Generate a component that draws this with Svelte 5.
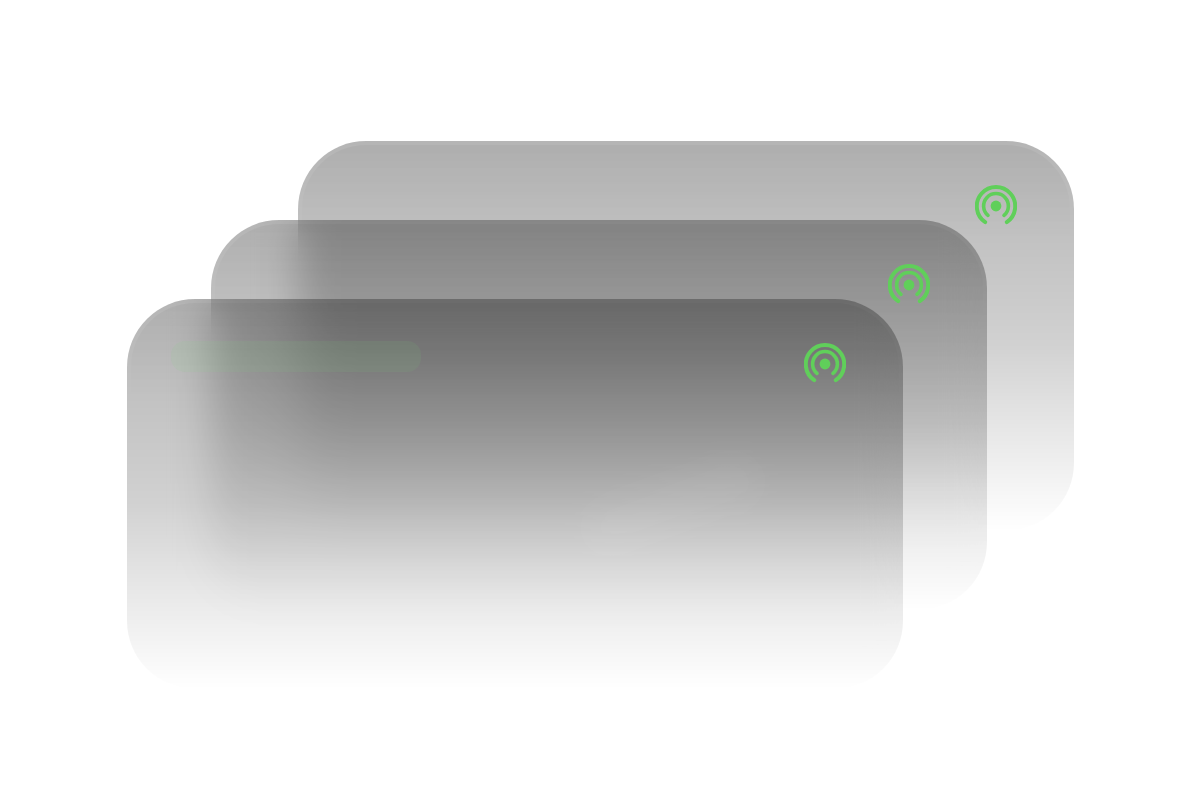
<script lang="ts">
  // stacked cards, back to front
  const CARDS = [
    { x: 298, y: 141, front: false },
    { x: 211, y: 220, front: false },
    { x: 127, y: 299, front: true },
  ]
</script>

<div class="stage">
  {#each CARDS as c}
    <div class="card" style="left:{c.x}px; top:{c.y}px">
      <div class="head">
        <div class="bar" class:hidden={!c.front}></div>
        <svg class="signal" viewBox="0 0 42 42" width="42" height="42" fill="none" aria-hidden="true">
          <path d="M10.2 37.1 A19.2 19.2 0 1 1 31.8 37.1" stroke="#60cf5a" stroke-width="4" stroke-linecap="round" />
          <path d="M13 30.4 A12.4 12.4 0 1 1 29 30.4" stroke="#60cf5a" stroke-width="3.6" stroke-linecap="round" />
          <circle cx="21" cy="21" r="5.4" fill="#60cf5a" />
        </svg>
      </div>
      {#if c.front}<div class="glow"></div>{/if}
    </div>
  {/each}
</div>

<style>
  :global(body) { background: #fff; }
  .stage { position: relative; width: 1200px; height: 800px; overflow: hidden; background: #fff; }
  .card {
    position: absolute;
    box-sizing: border-box;
    width: 776px;
    height: 390px;
    border-radius: 68px;
    border: 4px solid transparent;
    background:
      linear-gradient(180deg, rgba(0, 0, 0, 0.04) 0%, rgba(0, 0, 0, 0) 25%) padding-box,
      linear-gradient(180deg, rgba(0, 0, 0, 0.29) 0%, rgba(0, 0, 0, 0.25) 20%, rgba(0, 0, 0, 0.18) 52%, rgba(0, 0, 0, 0.1) 72%, rgba(0, 0, 0, 0) 100%) border-box;
    backdrop-filter: blur(20px);
  }
  .head {
    display: flex;
    justify-content: space-between;
    align-items: flex-start;
    padding: 40px 53px 0 40px;
  }
  .bar {
    width: 250px;
    height: 31px;
    margin-top: -2px;
    border-radius: 14px;
    background: rgba(110, 210, 110, 0.09);
  }
  .bar.hidden { visibility: hidden; }
  .signal { display: block; }
  /* faint light patch low on the front card */
  .glow {
    position: absolute;
    left: 450px;
    top: 180px;
    width: 180px;
    height: 44px;
    border-radius: 22px;
    background: rgba(255, 255, 255, 0.05);
    filter: blur(14px);
    transform: rotate(-20deg);
  }
</style>
